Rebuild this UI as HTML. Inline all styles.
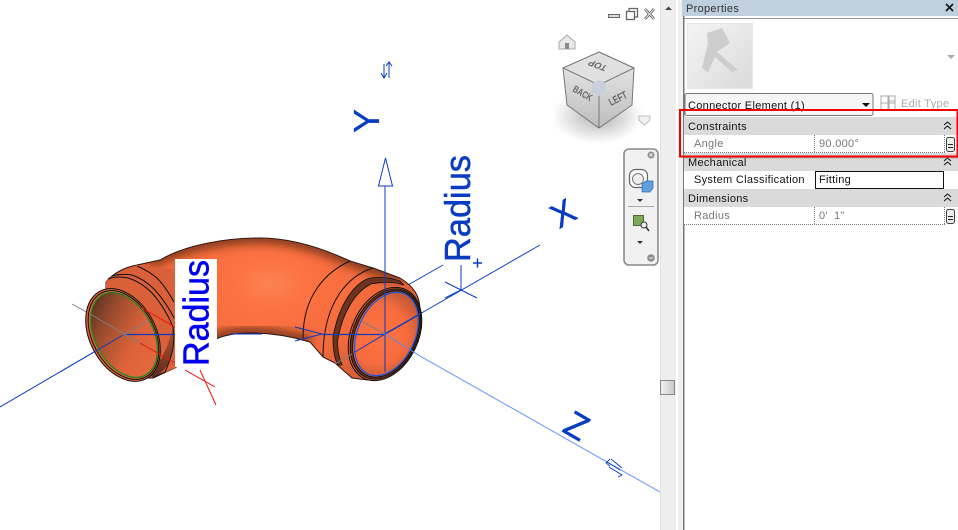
<!DOCTYPE html>
<html><head><meta charset="utf-8">
<style>
html,body{margin:0;padding:0;background:#fff;width:958px;height:530px;overflow:hidden}
svg{position:absolute;left:0;top:0}
text{font-family:"Liberation Sans",sans-serif}
.p{font-size:11px;letter-spacing:.3px;fill:#111}
.g{font-size:11px;letter-spacing:.3px;fill:#777}
</style></head><body>
<svg width="958" height="530" viewBox="0 0 958 530" xmlns="http://www.w3.org/2000/svg">
<defs>
<radialGradient id="body" gradientUnits="userSpaceOnUse" cx="270" cy="284" r="150" gradientTransform="translate(0 85) scale(1 .7)">
<stop offset="0" stop-color="#fb8250"/><stop offset=".25" stop-color="#fd7242"/><stop offset=".7" stop-color="#f26a3c"/><stop offset="1" stop-color="#d85f38"/></radialGradient>
<linearGradient id="inL" gradientUnits="userSpaceOnUse" x1="98" y1="300" x2="140" y2="362">
<stop offset="0" stop-color="#5e3020"/><stop offset=".3" stop-color="#9a4c2e"/><stop offset=".75" stop-color="#dc623a"/><stop offset="1" stop-color="#e2673c"/></linearGradient>
<radialGradient id="inR" gradientUnits="userSpaceOnUse" cx="378" cy="338" r="50">
<stop offset="0" stop-color="#fd7242"/><stop offset=".6" stop-color="#f66c3e"/><stop offset="1" stop-color="#b85635"/></radialGradient>
<linearGradient id="wedge" gradientUnits="userSpaceOnUse" x1="150" y1="370" x2="175" y2="335">
<stop offset="0" stop-color="#5e2e1c"/><stop offset="1" stop-color="#a84e2e"/></linearGradient>
<linearGradient id="cube" x1="0" y1="0" x2="0" y2="1"><stop offset="0" stop-color="#ececec"/><stop offset="1" stop-color="#bdbdbd"/></linearGradient>
<radialGradient id="shadow"><stop offset="0" stop-color="#777" stop-opacity=".6"/><stop offset="1" stop-color="#888" stop-opacity="0"/></radialGradient>
<linearGradient id="prev" x1="0" y1="0" x2="1" y2="1"><stop offset="0" stop-color="#f4f4f4"/><stop offset="1" stop-color="#dadada"/></linearGradient>
<linearGradient id="thumb" x1="0" y1="0" x2="1" y2="0"><stop offset="0" stop-color="#f2f2f2"/><stop offset="1" stop-color="#c8c8c8"/></linearGradient>
<filter id="blur" x="-20%" y="-20%" width="140%" height="140%"><feGaussianBlur stdDeviation="5"/></filter>
<clipPath id="silClip"><path d="M106 282C112 274 125 267 137 265L160 260C185 245 225 238 260 238C290 238 322 248 350 261L373 268L400 278C413 286 420 295 420 310C420 345 400 380 368 380L352 378L335 363L323 357L310 342C290 336 270 333 250 333C238 333 225 335 216 339L175 368L153 378L133 378C115 365 105 335 106 282Z"/></clipPath>
</defs>

<!-- axes behind -->
<g fill="none" stroke="#0a3cc0" stroke-width="1">
<path d="M0 407L123 335"/>
<path d="M385 334V186"/>
<path d="M378.500 186H392.500L385.500 158Z"/>
<path d="M408 285L443 265"/>
<path d="M418 315L540 245"/>
<path d="M461 265V290M445 282L477 298M445 298L461 290"/>
<path d="M473 263H482M477.500 258.500V267.500" stroke-width="1.500"/>
</g>
<path d="M72 304L90 314" stroke="#808080" fill="none"/>
<path d="M420 356L660 492" stroke="#7ba2f5" stroke-width="1.200" fill="none"/>

<!-- elbow silhouette -->
<path d="M106 282C112 274 125 267 137 265L160 260C185 245 225 238 260 238C290 238 322 248 350 261L373 268L400 278C413 286 420 295 420 310C420 345 400 380 368 380L352 378L335 363L323 357L310 342C290 336 270 333 250 333C238 333 225 335 216 339L175 368L153 378L133 378C115 365 105 335 106 282Z" fill="url(#body)" stroke="#2a140a" stroke-width="1"/>
<g clip-path="url(#silClip)">
<path d="M150 262C185 245 225 238 260 238C290 238 322 248 350 261L373 268L400 278" fill="none" stroke="#4a2010" stroke-width="9" filter="url(#blur)" opacity=".85"/>
<path d="M175 368L216 339C225 335 238 333 250 333C270 333 290 336 310 342" fill="none" stroke="#3a1a0c" stroke-width="9" filter="url(#blur)" opacity=".8"/>
<path d="M103 280L137 265L180 270L180 368L153 378L120 340Z" fill="#da6039"/>
<path d="M153 378C165 372 173 360 173 345V325C170 345 160 365 148 372Z" fill="url(#wedge)"/>
</g>

<!-- left collar arcs -->
<g fill="none" stroke="#111" stroke-width="1">
<path d="M108 279C116 276 122 277 128 278C138 281 146 287 152 293C161 303 168 315 173 327"/>
<path d="M112 276C119 274 126 274 132 275C141 278 149 284 155 290C163 299 169 308 174 318"/>
<path d="M137 266C144 269 151 273 157 278C164 285 169 293 174 302"/>
<path d="M173 327C175 340 174 352 165 372L153 378"/>
</g>
<!-- left rim -->
<ellipse cx="123" cy="335" rx="33" ry="49.500" transform="rotate(-28 123 335)" fill="#dd6238" stroke="#111"/>
<ellipse cx="123.500" cy="335" rx="31" ry="47.500" transform="rotate(-28 123.500 335)" fill="#dd6238" stroke="#111"/>
<ellipse cx="124" cy="335" rx="29" ry="45.500" transform="rotate(-28 124 335)" fill="url(#inL)" stroke="#148a1e" stroke-width="1.200"/>

<!-- right collar -->
<g fill="none" stroke="#111" stroke-width="1">
<path d="M350 261C326 272 303 295 303 338"/>
<path d="M373 268C350 275 323 300 323 357"/>
</g>
<path d="M400 281C385 276 373 277 367 279C350 287 338 310 333 337C333 348 334 358 338 365L342 365C338 355 337 345 338 338C343 312 355 292 371 284C385 281 395 282 404 285Z" fill="#6e3420" stroke="#111" stroke-width=".8"/>
<ellipse cx="385" cy="334" rx="33.500" ry="49" transform="rotate(25 385 334)" fill="#e0653a" stroke="#111"/>
<ellipse cx="385.500" cy="334" rx="32" ry="47.500" transform="rotate(25 385.500 334)" fill="#6e3420" stroke="#111"/>
<ellipse cx="386" cy="334" rx="30" ry="45.500" transform="rotate(25 386 334)" fill="url(#inR)" stroke="#111"/>
<ellipse cx="386.500" cy="334" rx="28.500" ry="44" transform="rotate(25 386.500 334)" fill="none" stroke="#1a55e0" stroke-width="1.200"/>

<!-- axes over the elbow -->
<g fill="none" stroke-width="1">
<path d="M60 372L123 335" stroke="#0a3cc0"/>
<path d="M123 334.500H175" stroke="#0a3cc0" stroke-width="1.200"/>
<path d="M231 334H262" stroke="#0a3cc0" stroke-width="1"/>
<path d="M322 334.500H385" stroke="#0a3cc0" stroke-width="1.200"/>
<path d="M385 334L420 314" stroke="#0a3cc0" stroke-width="1.400"/>
<path d="M355 352L385 334" stroke="#0a3cc0"/>
<path d="M385 270V372" stroke="#0a3cc0"/>
<path d="M295 327L322 334L295 341" stroke="#0a3cc0"/>
<path d="M90 314L150 349" stroke="#808080"/>
<path d="M123 335L148 321" stroke="#808080"/>
<path d="M363 322L385 334" stroke="#808080"/>
<path d="M335 364L352 354" stroke="#808080"/>
<path d="M385 334L420 356" stroke="#5a85ee"/>
<path d="M140 307L175 327M140 343L175 363" stroke="#f01010"/>
<path d="M185 370L215 387M200 370L216 405" stroke="#f01010"/>
</g>

<!-- radius label left -->
<rect x="175" y="259" width="42" height="108" fill="#fff"/>
<text transform="translate(208.500 366) rotate(-90)" font-size="36" textLength="106" lengthAdjust="spacingAndGlyphs" fill="#0000f0" stroke="#0000f0" stroke-width=".5">Radius</text>

<!-- big blue labels -->
<text transform="translate(379 133) rotate(-90)" font-size="36" fill="#0a3cc0" stroke="#0a3cc0" stroke-width=".3">Y</text>
<text transform="translate(470 262) rotate(-90)" font-size="36" textLength="107" lengthAdjust="spacingAndGlyphs" fill="#0a3cc0" stroke="#0a3cc0" stroke-width=".5">Radius</text>
<text transform="translate(563 213) rotate(-30)" font-size="34" text-anchor="middle" y="12" fill="#0a3cc0" stroke="#0a3cc0" stroke-width=".5">X</text>
<text transform="translate(561 431) rotate(30)" font-size="36" fill="#0a3cc0" stroke="#0a3cc0" stroke-width=".5">Z</text>

<!-- flip arrows -->
<g fill="none" stroke="#0a3cc0" stroke-width="1">
<path d="M384 64V78M381 73L384 78L387 73M389 62V78M386 66L389 62L392 66"/>
<path d="M607 462L620 470M610 459L606 463L610 466M609 467L622 475L618 477M611 459L622 468" stroke-width=".9"/>
</g>

<!-- window controls -->
<g fill="none" stroke="#666">
<rect x="608.500" y="14.500" width="11" height="3" fill="#ddd"/>
<rect x="626.500" y="11.500" width="8" height="8" stroke-width="1.300"/>
<path d="M629 11V8.500H637.500V17H635" stroke-width="1.300"/>
<path d="M645 9L654 19M654 9L645 19" stroke="#555" stroke-width="2.600"/>
<path d="M645 9L654 19M654 9L645 19" stroke="#eee" stroke-width="1"/>
</g>

<!-- view cube -->
<ellipse cx="598" cy="116" rx="46" ry="28" fill="url(#shadow)"/>
<path d="M559 42L567 35L575 42V49H559Z" fill="#e8e8e8" stroke="#aaa"/>
<rect x="565" y="43" width="4" height="6" fill="#888"/>
<path d="M599 52L634 68L632 105L599 128L567 105L563 68Z" fill="url(#cube)" stroke="#777"/>
<path d="M599 52L634 68L599 85L563 68Z" fill="#e0e0e0" stroke="#777"/>
<path d="M599 85V128" stroke="#777"/>
<path d="M592 83L599 80L606 83V92L599 96L592 92Z" fill="#c9cfdc"/>
<text transform="translate(608 66) rotate(200) skewX(-15)" font-size="9" font-weight="bold" fill="#666">TOP</text>
<text transform="translate(572 91) rotate(30) scale(.8 1.100)" font-size="9" font-weight="bold" fill="#666">BACK</text>
<text transform="translate(611 106) rotate(-27) scale(.85 1.200)" font-size="9" font-weight="bold" fill="#666">LEFT</text>
<path d="M639 116H650V120L644.500 125L639 120Z" fill="#f2f2f2" stroke="#bbb"/>

<!-- nav bar -->
<rect x="624" y="149" width="34" height="116" rx="5" fill="#f1f1f1" stroke="#8a8a8a" stroke-width="1.600"/>
<circle cx="651" cy="155" r="3.500" fill="#8c8c8c"/>
<path d="M649.500 153.500L652.500 156.500M652.500 153.500L649.500 156.500" stroke="#eee"/>
<rect x="629.500" y="169.500" width="18" height="18" rx="6" fill="#fafafa" stroke="#666" stroke-width="1.200"/>
<circle cx="638" cy="179" r="5.500" fill="#eee" stroke="#777"/>
<path d="M642 184L646 181H653V188L650 192H642Z" fill="#5f9ee0" stroke="#3a6da8" stroke-width=".8"/>
<path d="M637 199H643L640 202Z" fill="#333"/>
<path d="M628 206.500H654" stroke="#aaa"/>
<rect x="633.500" y="215.500" width="10" height="10" fill="#7fa85a" stroke="#4c6b30"/>
<circle cx="644" cy="225" r="3" fill="#eee" stroke="#333"/>
<path d="M646 227L649 231" stroke="#333" stroke-width="1.500"/>
<path d="M637 241H643L640 244Z" fill="#333"/>
<circle cx="651" cy="258" r="3.800" fill="#8c8c8c"/>
<path d="M649 258H653" stroke="#eee"/>

<!-- scrollbar strip -->
<rect x="660" y="0" width="16" height="530" fill="#eeeeee"/>
<rect x="660" y="0" width="1" height="530" fill="#e2e2e2"/>
<rect x="676" y="0" width="2" height="530" fill="#fff"/>
<rect x="678" y="0" width="5" height="530" fill="#f0f0f0"/>
<rect x="683" y="0" width="1.500" height="530" fill="#777"/>
<path d="M665 10L668.500 6.500L672 10Z" fill="#444"/>
<rect x="660.500" y="380.500" width="14" height="14" fill="url(#thumb)" stroke="#888"/>

<!-- properties panel -->
<rect x="682" y="0" width="276" height="16" fill="#bfcfdd"/>
<text x="686" y="12" class="p" style="fill:#333">Properties</text>
<path d="M946 4L953 11M953 4L946 11" stroke="#111" stroke-width="1.600"/>
<rect x="684.500" y="19" width="274" height="511" fill="#fff"/>
<rect x="684" y="18" width="274" height="1" fill="#999"/>
<rect x="687.500" y="23.500" width="65" height="65" fill="url(#prev)" stroke="#e6e6e6"/>
<path d="M707 33L722 28L730 43L717 52L738 70L732 72L715 57L708 72L702 68L708 43Z" fill="#cdcdcd"/>
<path d="M947 55H955L951 59Z" fill="#aaa"/>

<rect x="685" y="93.500" width="188" height="22" rx="2" fill="#f5f5f5" stroke="#777"/>
<text x="688" y="109" class="p">Connector Element (1)</text>
<path d="M862 103H870L866 107Z" fill="#111"/>
<g fill="none" stroke="#aaa">
<rect x="881" y="96" width="7" height="7"/><rect x="889" y="96" width="6" height="7"/><rect x="881" y="103" width="7" height="7"/><rect x="889" y="101" width="6" height="9"/>
</g>
<text x="901" y="107" class="g" style="fill:#aaa">Edit Type</text>

<rect x="684" y="117" width="274" height="18" fill="#dadada"/>
<rect x="684" y="153" width="274" height="18" fill="#dadada"/>
<rect x="684" y="189" width="274" height="18" fill="#dadada"/>
<rect x="684" y="135" width="274" height="18" fill="#fff"/>
<rect x="684" y="171" width="274" height="18" fill="#fff"/>
<rect x="684" y="207" width="274" height="18" fill="#fff"/>
<g stroke="#777" stroke-dasharray="1 1" fill="none">
<path d="M684 152.500H945M684 224.500H945M814.500 135V153M814.500 207V225M944.500 135V153M944.500 207V225"/>
</g>
<text x="688" y="130" class="p">Constraints</text>
<text x="694" y="147" class="g">Angle</text>
<text x="819" y="147" class="g">90.000°</text>
<text x="688" y="166" class="p">Mechanical</text>
<text x="694" y="183" class="p">System Classification</text>
<rect x="815.500" y="171.500" width="128" height="17" fill="#fff" stroke="#111"/>
<text x="819" y="183" class="p">Fitting</text>
<text x="688" y="202" class="p">Dimensions</text>
<text x="694" y="219" class="g">Radius</text>
<text x="819" y="219" class="g">0'</text><text x="834" y="219" class="g">1"</text>
<g fill="none" stroke="#111" stroke-width="1">
<path d="M944 125L947.500 122L951 125M944 129L947.500 126L951 129M944 161L947.500 158L951 161M944 165L947.500 162L951 165M944 197L947.500 194L951 197M944 201L947.500 198L951 201"/>
</g>
<g fill="#eee" stroke="#444">
<rect x="946.500" y="137.500" width="8" height="14" rx="2"/>
<rect x="946.500" y="209.500" width="8" height="14" rx="2"/>
</g>
<path d="M948 144.500H953M948 147.500H953M948 216.500H953M948 219.500H953" stroke="#222"/>

<rect x="680" y="110" width="277.500" height="46.500" fill="none" stroke="#f00000" stroke-width="2"/>
<path d="M684 158H958" stroke="#888" stroke-opacity=".5"/>
</svg>
</body></html>
